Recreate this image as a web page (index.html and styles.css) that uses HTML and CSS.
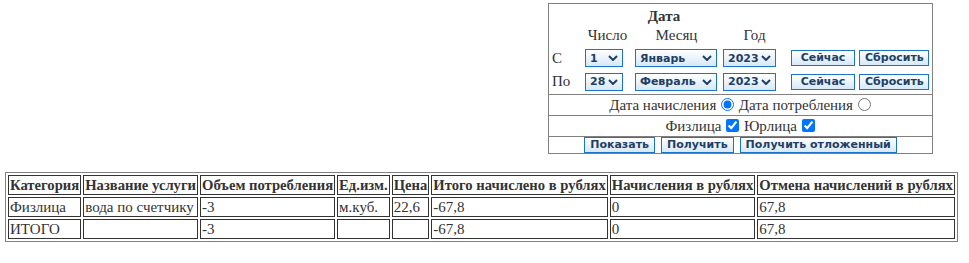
FILE: index.html
```html
<!DOCTYPE html>
<html>
<head>
  <meta charset="UTF-8">
  <title>Начисления</title>
  <link rel="stylesheet" href="styles.css">
</head>
<body>
  <form class="filter">
    <div class="dates">
      <div class="title">Дата</div>
      <div class="blank"></div>
      <div class="blank"></div>

      <div class="blank"></div>
      <div class="head">Число</div>
      <div class="head">Месяц</div>
      <div class="head">Год</div>
      <div class="blank"></div>
      <div class="blank"></div>

      <div class="label">С</div>
      <select class="sel day"><option>1</option></select>
      <select class="sel month"><option>Январь</option></select>
      <select class="sel year"><option>2023</option></select>
      <button type="button" class="btn now">Сейчас</button>
      <button type="button" class="btn reset">Сбросить</button>

      <div class="label">По</div>
      <select class="sel day"><option>28</option></select>
      <select class="sel month"><option>Февраль</option></select>
      <select class="sel year"><option>2023</option></select>
      <button type="button" class="btn now">Сейчас</button>
      <button type="button" class="btn reset">Сбросить</button>
    </div>
    <div class="row">
      Дата начисления <input type="radio" name="kind" checked> Дата потребления <input type="radio" name="kind">
    </div>
    <div class="row">
      Физлица <input type="checkbox" checked> Юрлица <input type="checkbox" checked>
    </div>
    <div class="row actions">
      <button type="button" class="btn">Показать</button>
      <button type="button" class="btn">Получить</button>
      <button type="button" class="btn">Получить отложенный</button>
    </div>
  </form>

  <table class="report">
    <tr>
      <th>Категория</th>
      <th>Название услуги</th>
      <th>Объем потребления</th>
      <th>Ед.изм.</th>
      <th>Цена</th>
      <th>Итого начислено в рублях</th>
      <th>Начисления в рублях</th>
      <th>Отмена начислений в рублях</th>
    </tr>
    <tr>
      <td>Физлица</td>
      <td>вода по счетчику</td>
      <td>-3</td>
      <td>м.куб.</td>
      <td>22,6</td>
      <td>-67,8</td>
      <td>0</td>
      <td>67,8</td>
    </tr>
    <tr>
      <td>ИТОГО</td>
      <td></td>
      <td>-3</td>
      <td></td>
      <td></td>
      <td>-67,8</td>
      <td>0</td>
      <td>67,8</td>
    </tr>
  </table>
</body>
</html>
```

FILE: styles.css
```css
body {
  margin: 3px 5px;
  font-family: "Liberation Serif", serif;
  font-size: 15px;
  color: #333;
  background: #fff;
}

.filter {
  width: 383px;
  margin: 0 0 18px 543px;
  border: 1px solid #808080;
}

.dates {
  display: grid;
  grid-template-columns: 36px 50px 88px 68px 68px 73px;
  grid-template-rows: 21px 21px 24px 23px;
  align-items: center;
  padding-bottom: 1px;
}

.title {
  grid-column: 1 / 5;
  text-align: center;
  font-weight: bold;
  padding-right: 12px;
  padding-top: 3px;
}

.head {
  text-align: center;
  padding-right: 5px;
}

.label {
  padding-left: 3px;
}

.sel {
  appearance: none;
  -webkit-appearance: none;
  height: 18px;
  padding: 0 0 0 4px;
  border: 1px solid #1c74c4;
  border-radius: 0;
  background:
    url("data:image/svg+xml;utf8,<svg xmlns='http://www.w3.org/2000/svg' width='10' height='6' viewBox='0 0 10 6'><path d='M1 1l4 4 4-4' fill='none' stroke='%231f3f66' stroke-width='2'/></svg>") no-repeat right 4px center,
    linear-gradient(#ffffff, #d6e8f8);
  color: #1f3f66;
  font-family: "DejaVu Sans", sans-serif;
  font-weight: bold;
  font-size: 11px;
}

.day { width: 38px; }
.month { width: 82px; }
.year { width: 53px; }

.btn {
  height: 16px;
  padding: 0 5px;
  border: 1px solid #1c74c4;
  border-radius: 0;
  background: linear-gradient(#ffffff, #d6e8f8);
  color: #1f3f66;
  font-family: "DejaVu Sans", sans-serif;
  font-weight: bold;
  font-size: 11px;
  line-height: 14px;
}

.now { width: 64px; }
.reset { width: 70px; }

.row {
  border-top: 1px solid #808080;
  text-align: center;
  height: 20px;
  line-height: 20px;
}

.row input {
  margin: 0 1px;
  vertical-align: -1px;
}

.actions {
  height: 16px;
  line-height: 16px;
  display: flex;
  justify-content: center;
  align-items: flex-end;
  gap: 6px;
}

.report {
  border: 1px solid #808080;
  border-spacing: 2px;
}

.report th,
.report td {
  border: 1px solid #333;
  padding: 0 1px;
  height: 18px;
  text-align: left;
  white-space: nowrap;
}

.report th {
  font-size: 14.65px;
}
```
